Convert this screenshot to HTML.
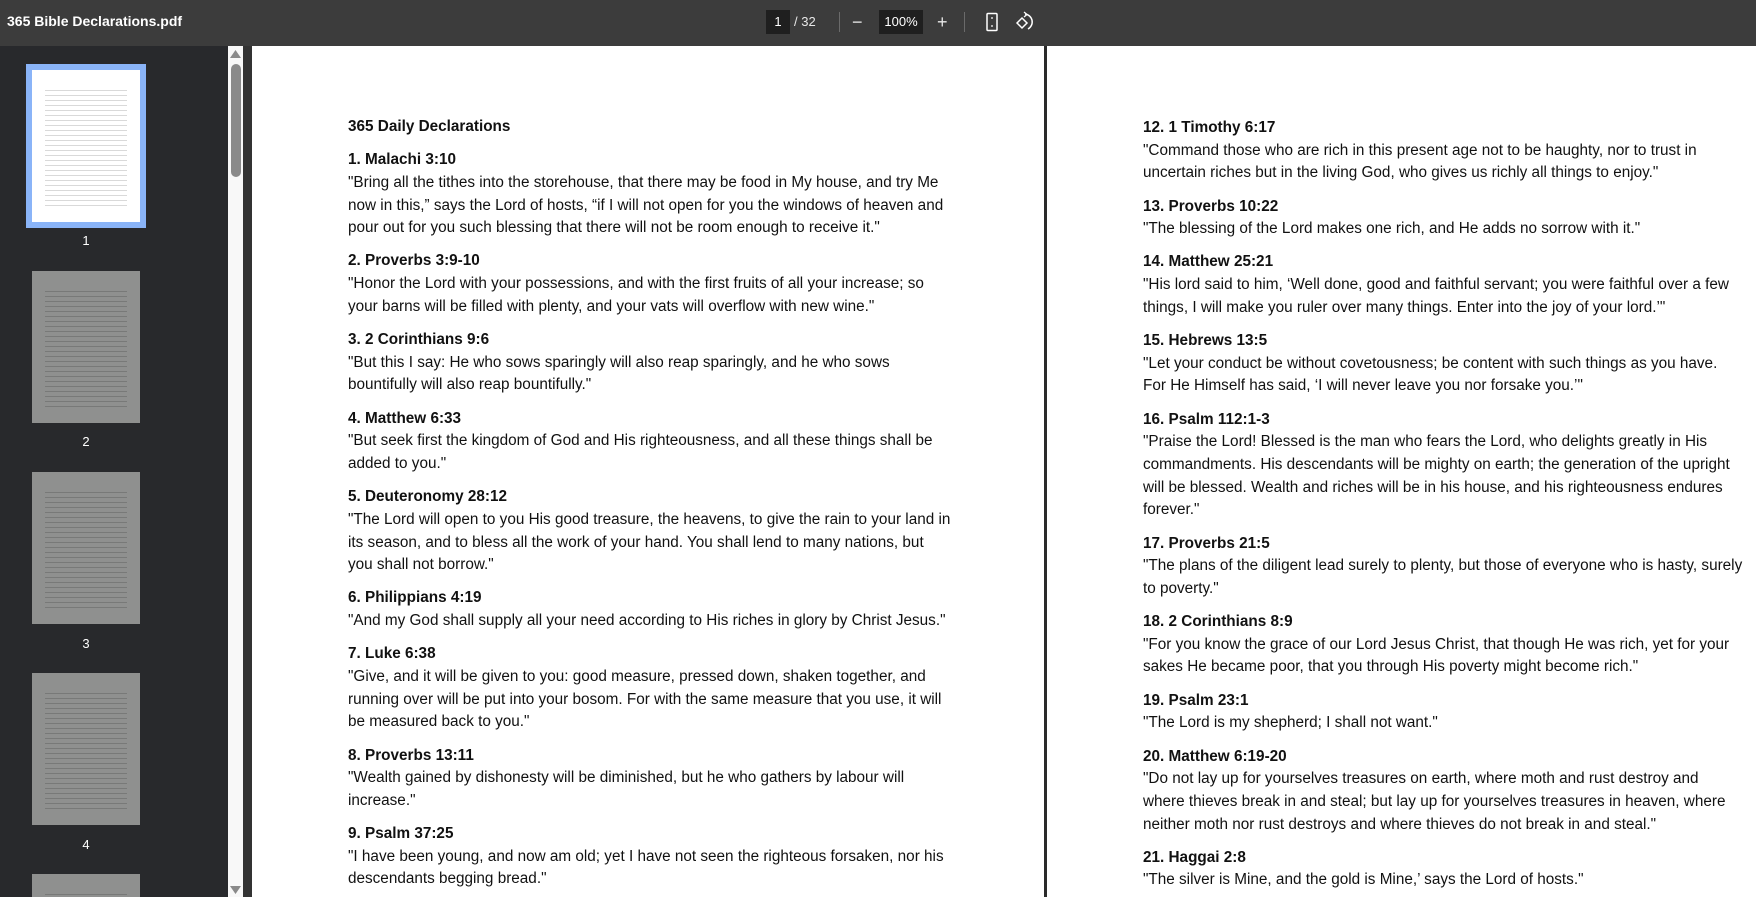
<!DOCTYPE html>
<html style="width:1756px;height:897px;overflow:hidden"><head><meta charset="utf-8">
<style>
*{margin:0;padding:0;box-sizing:border-box}
body{width:1756px;height:897px;overflow:hidden;background:#28292c;font-family:"Liberation Sans",sans-serif;position:relative}
.hdr{position:absolute;left:0;top:0;width:1756px;height:46px;background:#3c3c3c;color:#fff}
.hdr .t{position:absolute;left:7px;top:13px;font-size:14px;font-weight:bold}
.box{position:absolute;background:#1f1f1f;color:#fff;font-size:13px;text-align:center;line-height:24px;top:10px;height:24px}
.hdr .tx{position:absolute;top:10px;line-height:24px;font-size:13px;color:#e8e8e8}
.sep{position:absolute;top:12px;width:1px;height:20px;background:#6a6a6a}
.side{position:absolute;left:0;top:46px;width:228px;height:851px;background:#28292c;overflow:hidden}
.th{position:absolute;left:32px;width:108px;height:152px;background:#8f908f;
 background-image:repeating-linear-gradient(to bottom,transparent 0,transparent 4px,rgba(40,40,40,.22) 4px,rgba(40,40,40,.22) 5px);background-size:82px 120px;background-position:13px 16px;background-repeat:no-repeat}
.lbl{position:absolute;left:0;width:172px;text-align:center;color:#fff;font-size:13px}
.sb{position:absolute;left:228px;top:46px;width:15px;height:851px;background:#f8f8f8}
.sbt{position:absolute;left:231px;top:64px;width:10px;height:113px;background:#8a8a8a;border-radius:5px}
.gap{position:absolute;left:243px;top:46px;width:9px;height:851px;background:#333}
.pg{position:absolute;top:46px;height:851px;background:#fff;color:#111;font-size:15.3px;overflow:hidden}
.pg .c{position:absolute;white-space:nowrap}
.c div{height:22.7px;line-height:22.7px}
.c .h{font-weight:bold}
.c .g{height:10.5px}
</style></head><body>
<div class="hdr">
 <div class="t">365 Bible Declarations.pdf</div>
 <div class="box" style="left:766px;width:24px">1</div>
 <div class="tx" style="left:794px">/ 32</div>
 <div class="sep" style="left:839px"></div>
 <div class="tx" style="left:852px;font-size:18px">−</div>
 <div class="box" style="left:879px;width:44px">100%</div>
 <div class="tx" style="left:937px;font-size:18px">+</div>
 <div class="sep" style="left:964px"></div>
 <svg style="position:absolute;left:985px;top:12px" width="14" height="20" viewBox="0 0 14 20"><rect x="2" y="1.5" width="10" height="17" rx="1" fill="none" stroke="#fff" stroke-width="1.5"/><path d="M7 5v2M7 13v2" stroke="#fff" stroke-width="1.2"/></svg>
 <svg style="position:absolute;left:1015px;top:11px" width="20" height="22" viewBox="0 0 20 22"><path d="M2 12l5-5 5 5-5 5z" fill="none" stroke="#fff" stroke-width="1.5"/><path d="M10 3a8 8 0 0 1 3 15" fill="none" stroke="#fff" stroke-width="1.5"/><path d="M9 1l3 2.5-3 2.5" fill="none" stroke="#fff" stroke-width="1.3"/></svg>
</div>
<div class="side">
 <div style="position:absolute;left:26px;top:18px;width:120px;height:164px;background:#8ab4f8"></div>
 <div class="th" style="top:24px;left:32px;background-color:#fff;background-image:repeating-linear-gradient(to bottom,transparent 0,transparent 4px,rgba(0,0,0,.15) 4px,rgba(0,0,0,.15) 5px)"></div>
 <div class="lbl" style="top:187px">1</div>
 <div class="th" style="top:225px"></div>
 <div class="lbl" style="top:388px">2</div>
 <div class="th" style="top:426px"></div>
 <div class="lbl" style="top:590px">3</div>
 <div class="th" style="top:627px"></div>
 <div class="lbl" style="top:791px">4</div>
 <div class="th" style="top:828px"></div>
</div>
<div class="sb"></div>
<div class="sbt"></div>
<svg style="position:absolute;left:230px;top:50px" width="11" height="8"><path d="M0 8L5.5 0 11 8z" fill="#8a8a8a"/></svg>
<svg style="position:absolute;left:230px;top:886px" width="11" height="8"><path d="M0 0L5.5 8 11 0z" fill="#8a8a8a"/></svg>
<div class="gap"></div>
<div class="pg" style="left:252px;width:792px">
 <div class="c" style="left:96px;top:70px">
  <div class="h">365 Daily Declarations</div><div class="g"></div>
  <div class="h">1. Malachi 3:10</div>
  <div>"Bring all the tithes into the storehouse, that there may be food in My house, and try Me</div>
  <div>now in this,” says the Lord of hosts, “if I will not open for you the windows of heaven and</div>
  <div>pour out for you such blessing that there will not be room enough to receive it."</div><div class="g"></div>
  <div class="h">2. Proverbs 3:9-10</div>
  <div>"Honor the Lord with your possessions, and with the first fruits of all your increase; so</div>
  <div>your barns will be filled with plenty, and your vats will overflow with new wine."</div><div class="g"></div>
  <div class="h">3. 2 Corinthians 9:6</div>
  <div>"But this I say: He who sows sparingly will also reap sparingly, and he who sows</div>
  <div>bountifully will also reap bountifully."</div><div class="g"></div>
  <div class="h">4. Matthew 6:33</div>
  <div>"But seek first the kingdom of God and His righteousness, and all these things shall be</div>
  <div>added to you."</div><div class="g"></div>
  <div class="h">5. Deuteronomy 28:12</div>
  <div>"The Lord will open to you His good treasure, the heavens, to give the rain to your land in</div>
  <div>its season, and to bless all the work of your hand. You shall lend to many nations, but</div>
  <div>you shall not borrow."</div><div class="g"></div>
  <div class="h">6. Philippians 4:19</div>
  <div>"And my God shall supply all your need according to His riches in glory by Christ Jesus."</div><div class="g"></div>
  <div class="h">7. Luke 6:38</div>
  <div>"Give, and it will be given to you: good measure, pressed down, shaken together, and</div>
  <div>running over will be put into your bosom. For with the same measure that you use, it will</div>
  <div>be measured back to you."</div><div class="g"></div>
  <div class="h">8. Proverbs 13:11</div>
  <div>"Wealth gained by dishonesty will be diminished, but he who gathers by labour will</div>
  <div>increase."</div><div class="g"></div>
  <div class="h">9. Psalm 37:25</div>
  <div>"I have been young, and now am old; yet I have not seen the righteous forsaken, nor his</div>
  <div>descendants begging bread."</div>
 </div>
</div>
<div style="position:absolute;left:1044px;top:46px;width:3px;height:851px;background:#2a2a2a"></div>
<div class="pg" style="left:1047px;width:709px">
 <div class="c" style="left:96px;top:71px">
  <div class="h">12. 1 Timothy 6:17</div>
  <div>"Command those who are rich in this present age not to be haughty, nor to trust in</div>
  <div>uncertain riches but in the living God, who gives us richly all things to enjoy."</div><div class="g"></div>
  <div class="h">13. Proverbs 10:22</div>
  <div>"The blessing of the Lord makes one rich, and He adds no sorrow with it."</div><div class="g"></div>
  <div class="h">14. Matthew 25:21</div>
  <div>"His lord said to him, ‘Well done, good and faithful servant; you were faithful over a few</div>
  <div>things, I will make you ruler over many things. Enter into the joy of your lord.’"</div><div class="g"></div>
  <div class="h">15. Hebrews 13:5</div>
  <div>"Let your conduct be without covetousness; be content with such things as you have.</div>
  <div>For He Himself has said, ‘I will never leave you nor forsake you.’"</div><div class="g"></div>
  <div class="h">16. Psalm 112:1-3</div>
  <div>"Praise the Lord! Blessed is the man who fears the Lord, who delights greatly in His</div>
  <div>commandments. His descendants will be mighty on earth; the generation of the upright</div>
  <div>will be blessed. Wealth and riches will be in his house, and his righteousness endures</div>
  <div>forever."</div><div class="g"></div>
  <div class="h">17. Proverbs 21:5</div>
  <div>"The plans of the diligent lead surely to plenty, but those of everyone who is hasty, surely</div>
  <div>to poverty."</div><div class="g"></div>
  <div class="h">18. 2 Corinthians 8:9</div>
  <div>"For you know the grace of our Lord Jesus Christ, that though He was rich, yet for your</div>
  <div>sakes He became poor, that you through His poverty might become rich."</div><div class="g"></div>
  <div class="h">19. Psalm 23:1</div>
  <div>"The Lord is my shepherd; I shall not want."</div><div class="g"></div>
  <div class="h">20. Matthew 6:19-20</div>
  <div>"Do not lay up for yourselves treasures on earth, where moth and rust destroy and</div>
  <div>where thieves break in and steal; but lay up for yourselves treasures in heaven, where</div>
  <div>neither moth nor rust destroys and where thieves do not break in and steal."</div><div class="g"></div>
  <div class="h">21. Haggai 2:8</div>
  <div>"The silver is Mine, and the gold is Mine,’ says the Lord of hosts."</div>
 </div>
</div>
</body></html>
